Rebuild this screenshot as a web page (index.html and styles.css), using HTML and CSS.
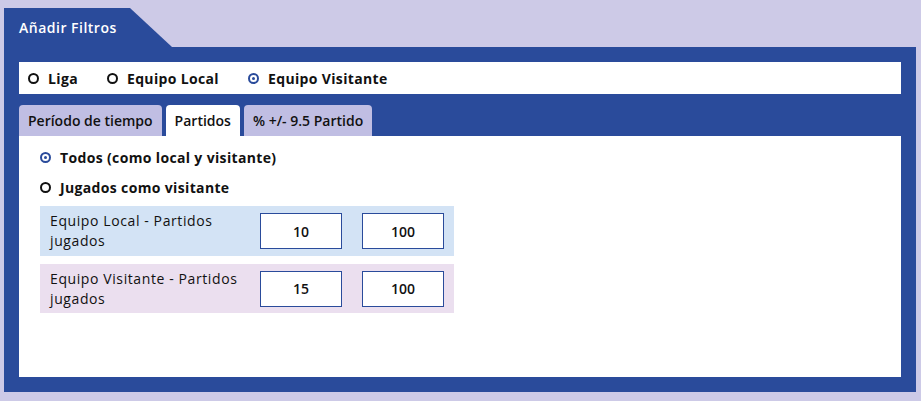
FILE: index.html
```html
<!DOCTYPE html>
<html lang="es">
<head>
    <meta charset="UTF-8">
    <title>Añadir Filtros</title>
    <link rel="stylesheet" href="styles.css">
</head>
<body>
    <div class="filters">
        <div class="filters-head">Añadir Filtros</div>
        <div class="filters-body">
            <div class="scope">
                <label class="radio"><span class="dot"></span>Liga</label>
                <label class="radio"><span class="dot"></span>Equipo Local</label>
                <label class="radio"><span class="dot on"></span>Equipo Visitante</label>
            </div>

            <div class="tabs">
                <div class="tab">Período de tiempo</div>
                <div class="tab active">Partidos</div>
                <div class="tab">% +/- 9.5 Partido</div>
            </div>

            <div class="tab-content">
                <label class="radio"><span class="dot on"></span>Todos (como local y visitante)</label>
                <label class="radio"><span class="dot"></span>Jugados como visitante</label>

                <div class="row local">
                    <div class="row-label">Equipo Local - Partidos jugados</div>
                    <input class="num" type="text" value="10">
                    <input class="num" type="text" value="100">
                </div>
                <div class="row visit">
                    <div class="row-label">Equipo Visitante - Partidos jugados</div>
                    <input class="num" type="text" value="15">
                    <input class="num" type="text" value="100">
                </div>
            </div>
        </div>
    </div>
</body>
</html>
```
FILE: styles.css
```css
body {
    margin: 0;
    padding: 8px 5px 9px 4px;
    background-color: #cdcae7;
    font-family: 'Open Sans', Arial, sans-serif;
    color: #111;
}
.filters-head {
    width: 168px;
    height: 39px;
    box-sizing: border-box;
    padding: 10px 0 0 15px;
    background-color: #2a4b9b;
    color: #fff;
    font-size: 14px;
    font-weight: 600;
    letter-spacing: 0.5px;
    clip-path: polygon(0 0, 126px 0, 100% 100%, 0 100%);
}
.filters-body {
    background-color: #2a4b9b;
    padding: 15px;
}
.scope {
    display: flex;
    align-items: center;
    gap: 29px;
    height: 32px;
    padding: 0 9px;
    background-color: #fff;
}
.radio {
    display: flex;
    align-items: center;
    font-size: 14px;
    font-weight: 700;
    letter-spacing: 0.35px;
}
.dot {
    width: 7px;
    height: 7px;
    margin-right: 9px;
    border: 2px solid #111;
    border-radius: 50%;
    display: inline-flex;
    align-items: center;
    justify-content: center;
}
.dot.on {
    border-color: #2a4b9b;
}
.dot.on::after {
    content: '';
    width: 3px;
    height: 3px;
    border-radius: 50%;
    background-color: #2a4b9b;
}
.tabs {
    display: flex;
    gap: 4px;
    margin-top: 11px;
}
.tab {
    height: 31px;
    padding: 0 9px;
    display: flex;
    align-items: center;
    background-color: #c0bee3;
    border-radius: 4px 4px 0 0;
    font-size: 14px;
    font-weight: 600;
}
.tab.active {
    background-color: #fff;
}
.tab-content {
    height: 241px;
    box-sizing: border-box;
    padding: 10px 21px 0;
    background-color: #fff;
}
.tab-content .radio {
    height: 22px;
}
.tab-content .radio + .radio {
    margin-top: 8px;
}
.row {
    display: flex;
    align-items: center;
    width: 414px;
    height: 50px;
    box-sizing: border-box;
    padding: 0 10px;
    font-size: 14px;
    letter-spacing: 0.6px;
}
.local {
    margin-top: 8px;
    background-color: #d3e3f5;
}
.visit {
    margin-top: 8px;
    height: 49px;
    background-color: #ebdfef;
}
.row-label {
    flex: 0 0 210px;
    line-height: 20px;
}
.num {
    width: 82px;
    height: 36px;
    box-sizing: border-box;
    border: 1px solid #2a4b9b;
    text-align: center;
    font-family: inherit;
    font-size: 14px;
    font-weight: 600;
    color: #111;
}
.num + .num {
    margin-left: 20px;
}
```
